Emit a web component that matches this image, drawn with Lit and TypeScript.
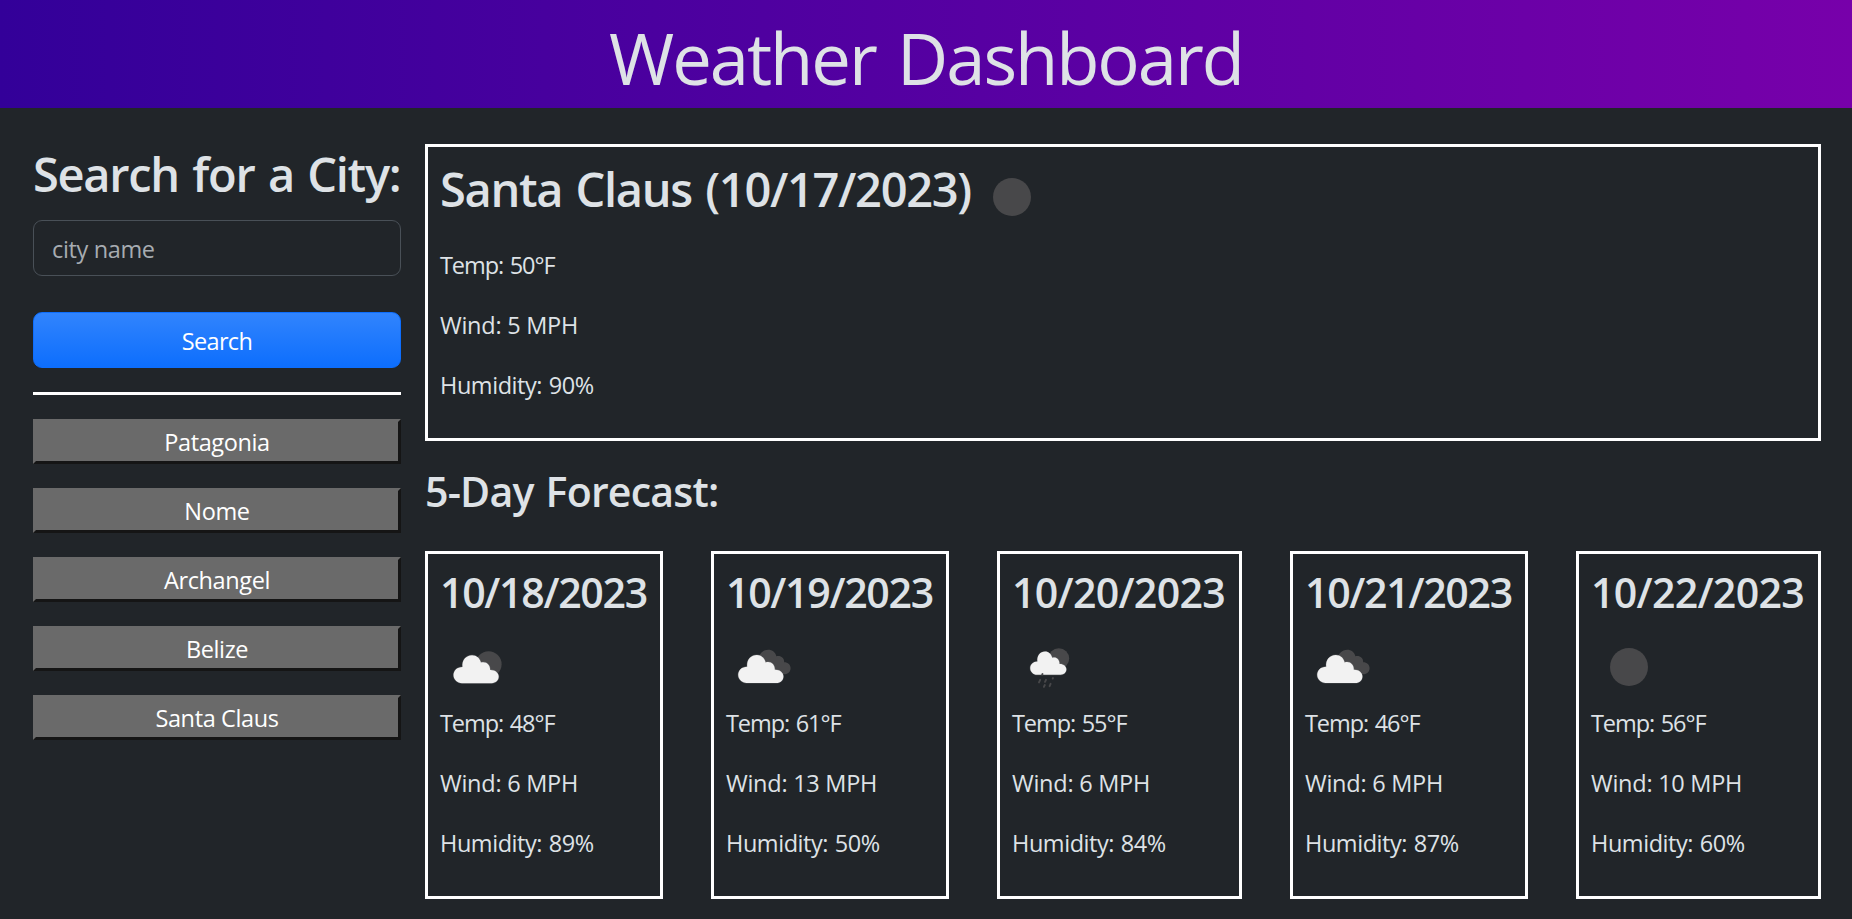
import { LitElement, html, css, svg } from "lit";
import { customElement, property } from "lit/decorators.js";

type Condition = "clear" | "few" | "broken" | "rain";

interface Day {
  date: string;
  icon: Condition;
  temp: number;
  wind: number;
  humidity: number;
}

const CITIES = ["Patagonia", "Nome", "Archangel", "Belize", "Santa Claus"];

const FORECAST: Day[] = [
  { date: "10/18/2023", icon: "few", temp: 48, wind: 6, humidity: 89 },
  { date: "10/19/2023", icon: "broken", temp: 61, wind: 13, humidity: 50 },
  { date: "10/20/2023", icon: "rain", temp: 55, wind: 6, humidity: 84 },
  { date: "10/21/2023", icon: "broken", temp: 46, wind: 6, humidity: 87 },
  { date: "10/22/2023", icon: "clear", temp: 56, wind: 10, humidity: 60 },
];

const cloud =
  "M8.5 28 C3.8 28 0 24.4 0 19.8 C0 15.3 3.8 11.7 9 11.8 C8.2 5 12.5 0 18.6 0 C23 0 26.4 3 27.4 7.4 C32.5 5.8 36.7 9.2 36.6 14.8 C41.5 14.6 45.2 17.6 45.2 21.4 C45.2 25.2 42.2 28 38.2 28 Z";

@customElement("weather-icon")
export class WeatherIcon extends LitElement {
  static styles = css`
    :host { display: block; width: 75px; height: 75px; flex: none; }
    svg { display: block; }
    .moon { fill: #48484a; }
    .cloud { fill: #f2f2f2; stroke: #f2f2f2; stroke-opacity: 0.25; stroke-width: 0.8; }
    .drop { fill: none; stroke: #48484a; stroke-width: 1.9; stroke-linecap: round; }
  `;

  @property() condition: Condition = "clear";

  private art() {
    switch (this.condition) {
      case "few":
        return svg`<circle class="moon" cx="48.6" cy="35.2" r="13"/>
          <path class="cloud" transform="translate(13.5 26.2)" d=${cloud}/>`;
      case "broken":
        return svg`<path class="moon" d="M32 32 C32.5 25 37 20.8 42.3 20.8 C46.4 20.8 49.4 23.3 50.4 27.3 C55 26.4 58.2 29 58.2 33.2 C62 33.2 64.6 35.8 64.6 39.2 C64.6 42.6 62 45.2 58.2 45.2 L44 42 Z"/>
          <path class="cloud" transform="translate(12.2 26)" d=${cloud}/>`;
      case "rain":
        return svg`<circle class="moon" cx="46.8" cy="29.6" r="10.4"/>
          <path class="cloud" transform="translate(18.2 22.6) scale(.8 .83)" d=${cloud}/>
          <path class="drop" d="M28.2 50.8l-1.2 2.6M34 50.8l-1 2M41 49l-.3.6M32.8 56l-.9 1.8M38.6 54.8l-1 2.4M30.5 45l-.3.6"/>`;
      default:
        return svg`<circle class="moon" cx="38" cy="38" r="19"/>`;
    }
  }

  render() {
    return html`<svg width="75" height="75" viewBox="0 0 75 75" aria-hidden="true">${this.art()}</svg>`;
  }
}

@customElement("app-root")
export class AppRoot extends LitElement {
  static styles = css`
    :host {
      display: block;
      min-height: 919px;
      box-sizing: border-box;
      background: #212529;
      color: #dee2e6;
      font-family: "Open Sans", "Noto Sans", sans-serif;
      font-size: 23.5px;
      line-height: 36px;
    }
    * { box-sizing: border-box; margin: 0; }
    header {
      height: 108px;
      padding-top: 14px;
      background: linear-gradient(to right, #330099, #7700aa);
      text-align: center;
    }
    h1 {
      font-weight: 400;
      font-size: 70.6px;
      line-height: 88px;
      letter-spacing: -2.05px;
      word-spacing: 5px;
    }
    .layout {
      display: grid;
      grid-template-columns: 368px 1396px;
      column-gap: 24px;
      padding: 36px 31px 0 33px;
    }
    h2, h3 { font-weight: 600; white-space: nowrap; }
    h2 { font-size: 47px; line-height: 61px; letter-spacing: -1.32px; word-spacing: 2.5px; }
    h3 { font-size: 41.1px; line-height: 52px; height: 50px; letter-spacing: -0.7px; }
    .sidebar, .main { display: flex; flex-direction: column; }
    .sidebar h2 { height: 76px; letter-spacing: -1.29px; }
    input {
      height: 56px;
      padding: 2px 18px 0;
      border: 1px solid #495057;
      border-radius: 9px;
      background: #212529;
      color: inherit;
      font: inherit;
      letter-spacing: -0.36px;
    }
    input::placeholder { color: #a7acb1; opacity: 1; }
    .search {
      height: 56px;
      margin-top: 36px;
      padding: 1px 0 0;
      border: 1px solid #0d6efd;
      border-radius: 9px;
      background: linear-gradient(180deg, #3184fd, #0d6efd);
      color: #fff;
      font: inherit;
      letter-spacing: -0.66px;
    }
    hr { width: 100%; height: 3px; margin: 24px 0; border: 0; background: #fff; }
    .history { display: flex; flex-direction: column; gap: 24px; }
    .city {
      height: 45px;
      padding: 0;
      border: 3px solid;
      border-color: #6a6a6a #151515 #151515 #6a6a6a;
      background: #6a6a6a;
      color: #fff;
      font: inherit;
      line-height: 36px;
      letter-spacing: -0.38px;
    }
    .box { border: 3px solid #fff; padding: 12px; }
    .current { height: 297px; }
    .current-head { display: flex; height: 75px; margin-bottom: 12px; gap: 3px; }
    .stat { height: 36px; margin-bottom: 24px; line-height: 39px; white-space: nowrap; letter-spacing: -0.26px; }
    .humidity { letter-spacing: -0.45px; word-spacing: 1px; }
    .temp { letter-spacing: -1.07px; word-spacing: 1.6px; }
    .forecast-title { margin: 24px 0 36px; letter-spacing: -0.8px; word-spacing: 2px; line-height: 53px; }
    .days {
      display: grid;
      grid-template-columns: 238px 238px 245px 238px 245px;
      column-gap: 48px;
    }
    .day { height: 348px; }
    .day h3 { margin-bottom: 13px; }
    .day h3.kerned { letter-spacing: -1.32px; }
  `;

  private stats(d: { temp: number; wind: number; humidity: number }) {
    return html`
      <p class="stat temp">Temp: ${d.temp}°F</p>
      <p class="stat">Wind: ${d.wind} MPH</p>
      <p class="stat humidity">Humidity: ${d.humidity}%</p>`;
  }

  render() {
    return html`
      <header><h1>Weather Dashboard</h1></header>
      <div class="layout">
        <aside class="sidebar">
          <h2>Search for a City:</h2>
          <input type="text" placeholder="city name" />
          <button class="search">Search</button>
          <hr />
          <div class="history">${CITIES.map((c) => html`<button class="city">${c}</button>`)}</div>
        </aside>
        <main class="main">
          <section class="box current">
            <div class="current-head">
              <h2>Santa Claus (10/17/2023)</h2>
              <weather-icon condition="clear"></weather-icon>
            </div>
            ${this.stats({ temp: 50, wind: 5, humidity: 90 })}
          </section>
          <h3 class="forecast-title">5-Day Forecast:</h3>
          <section class="days">
            ${FORECAST.map((d) => html`
              <article class="box day">
                <h3 class=${/\/1|1\//.test(d.date.slice(2, 6)) ? "kerned" : ""}>${d.date}</h3>
                <weather-icon condition=${d.icon}></weather-icon>
                ${this.stats(d)}
              </article>`)}
          </section>
        </main>
      </div>`;
  }
}
